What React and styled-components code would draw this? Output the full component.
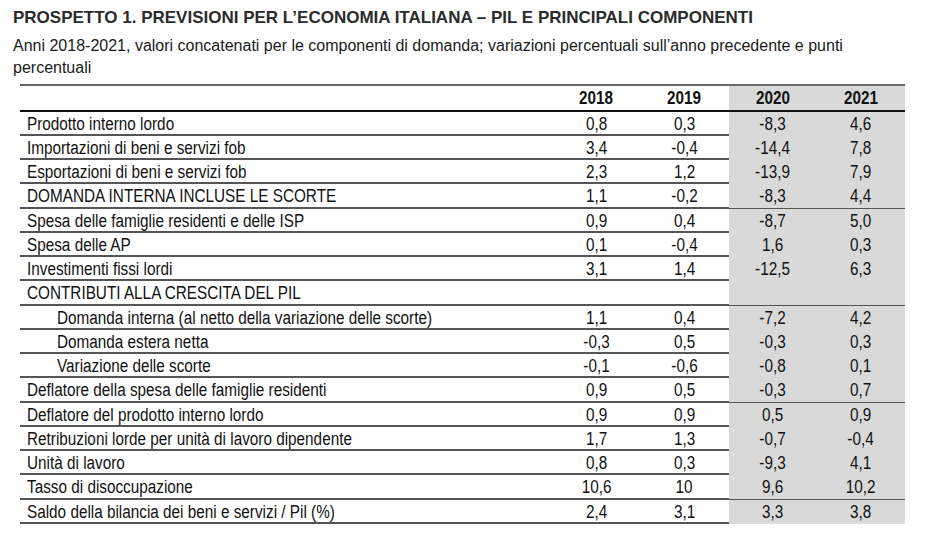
import React from 'react'
import styled, { createGlobalStyle } from 'styled-components';

const rows = [
   { label: 'Prodotto interno lordo', v: ['0,8', '0,3', '-8,3', '4,6'] },
   { label: 'Importazioni di beni e servizi fob', v: ['3,4', '-0,4', '-14,4', '7,8'] },
   { label: 'Esportazioni di beni e servizi fob', v: ['2,3', '1,2', '-13,9', '7,9'] },
   { label: 'DOMANDA INTERNA INCLUSE LE SCORTE', v: ['1,1', '-0,2', '-8,3', '4,4'] },
   { label: 'Spesa delle famiglie residenti e delle ISP', v: ['0,9', '0,4', '-8,7', '5,0'] },
   { label: 'Spesa delle AP', v: ['0,1', '-0,4', '1,6', '0,3'] },
   { label: 'Investimenti fissi lordi', v: ['3,1', '1,4', '-12,5', '6,3'] },
   { label: 'CONTRIBUTI ALLA CRESCITA DEL PIL', v: ['', '', '', ''] },
   { label: 'Domanda interna (al netto della variazione delle scorte)', v: ['1,1', '0,4', '-7,2', '4,2'], indent: true },
   { label: 'Domanda estera netta', v: ['-0,3', '0,5', '-0,3', '0,3'], indent: true },
   { label: 'Variazione delle scorte', v: ['-0,1', '-0,6', '-0,8', '0,1'], indent: true },
   { label: 'Deflatore della spesa delle famiglie residenti', v: ['0,9', '0,5', '-0,3', '0,7'] },
   { label: 'Deflatore del prodotto interno lordo', v: ['0,9', '0,9', '0,5', '0,9'] },
   { label: 'Retribuzioni lorde per unità di lavoro dipendente', v: ['1,7', '1,3', '-0,7', '-0,4'] },
   { label: 'Unità di lavoro', v: ['0,8', '0,3', '-9,3', '4,1'] },
   { label: 'Tasso di disoccupazione', v: ['10,6', '10', '9,6', '10,2'] },
   { label: 'Saldo della bilancia dei beni e servizi / Pil (%)', v: ['2,4', '3,1', '3,3', '3,8'] },
];

const years = ['2018', '2019', '2020', '2021'];

const App = () => {
   return (
      <>
         <GlobalStyle />
         <StPage>
            <StTitle>PROSPETTO 1. PREVISIONI PER L’ECONOMIA ITALIANA – PIL E PRINCIPALI COMPONENTI</StTitle>
            <StSubtitle>
               Anni 2018-2021, valori concatenati per le componenti di domanda; variazioni percentuali sull’anno precedente e punti percentuali
            </StSubtitle>
            <StTable>
               <StHeadRow>
                  <StLabel />
                  {years.map((y, i) => (
                     <StCell key={y} $shade={i >= 2} $bold>
                        <StNarrow $origin="center">{y}</StNarrow>
                     </StCell>
                  ))}
               </StHeadRow>
               {rows.map((r) => (
                  <StRow key={r.label}>
                     <StLabel $indent={r.indent}>
                        <StNarrow $origin="left">{r.label}</StNarrow>
                     </StLabel>
                     {r.v.map((val, i) => (
                        <StCell key={i} $shade={i >= 2}>
                           <StNarrow $origin="center">{val}</StNarrow>
                        </StCell>
                     ))}
                  </StRow>
               ))}
            </StTable>
         </StPage>
      </>
   )
}

const GlobalStyle = createGlobalStyle`
   body {
      margin: 0;
      background: #fff;
      font-family: "Liberation Sans", Arial, sans-serif;
      color: #111;
   }
`;

const StPage = styled.div`
   width: 933px;
   height: 544px;
   padding: 7px 0 0 13px;
   box-sizing: border-box;
`;

const StTitle = styled.h1`
   margin: 0;
   font-size: 17px;
   font-weight: bold;
   line-height: 22px;
   color: #2b2b2b;
`;

const StSubtitle = styled.p`
   margin: 6px 0 0;
   width: 870px;
   font-size: 16px;
   line-height: 22px;
   color: #1a1a1a;
`;

const StTable = styled.div`
   margin: 5px 0 0 7px;
   width: 885px;
   border-top: 2px solid #666;
`;

const StHeadRow = styled.div`
   display: grid;
   grid-template-columns: 532px repeat(4, 1fr);
   height: 26px;
   border-bottom: 2px solid #111;
   box-sizing: border-box;
`;

const StRow = styled.div`
   display: grid;
   grid-template-columns: 532px repeat(4, 1fr);
   height: 24px;
   border-bottom: 2px solid #555;
   box-sizing: border-box;
   &:nth-child(4n + 1) {
      height: 25px;
   }
`;

// narrow face emulated by horizontal compression
const StNarrow = styled.span`
   display: inline-block;
   white-space: nowrap;
   transform: scaleX(0.85);
   transform-origin: ${(p) => p.$origin};
`;

const StLabel = styled.div`
   padding-left: ${(p) => (p.$indent ? '37px' : '7px')};
   font-size: 18px;
   line-height: 24px;
   white-space: nowrap;
`;

const StCell = styled.div`
   text-align: center;
   font-size: 18px;
   line-height: 24px;
   font-weight: ${(p) => (p.$bold ? 'bold' : 'normal')};
   background: ${(p) => (p.$shade ? '#d9d9d9' : 'transparent')};
`;

export default App
